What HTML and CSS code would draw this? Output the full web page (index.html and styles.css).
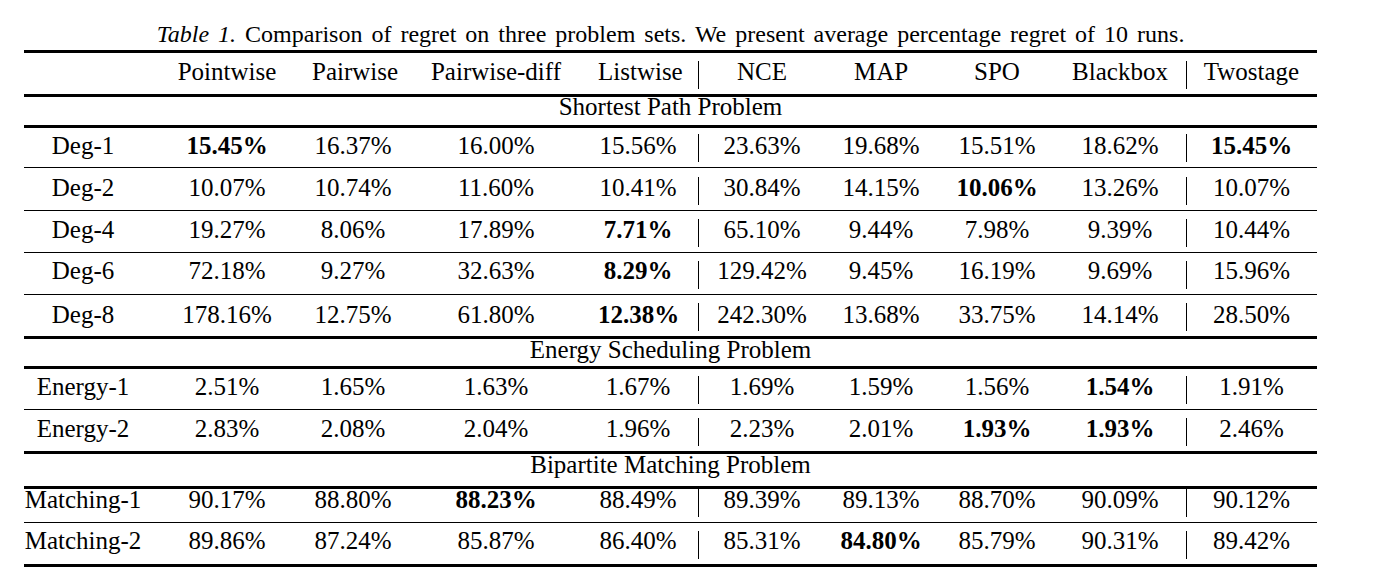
FILE: index.html
```html
<!DOCTYPE html>
<html>
<head>
<meta charset="utf-8">
<link rel="stylesheet" href="styles.css">
</head>
<body>
<table class="results">
  <caption><em>Table 1.</em> Comparison of regret on three problem sets. We present average percentage regret of 10 runs.</caption>
  <colgroup>
    <col class="c-label"><col class="c-point"><col class="c-pair"><col class="c-pdiff"><col class="c-list"><col class="c-nce"><col class="c-map"><col class="c-spo"><col class="c-bb"><col class="c-two">
  </colgroup>
  <thead>
    <tr class="head">
      <th></th><th>Pointwise</th><th>Pairwise</th><th>Pairwise-diff</th><th>Listwise</th><th>NCE</th><th>MAP</th><th>SPO</th><th>Blackbox</th><th>Twostage</th>
    </tr>
  </thead>
  <tbody>
    <tr class="section s1"><td colspan="10">Shortest Path Problem</td></tr>
    <tr class="row r-deg1"><td>Deg-1</td><td><b>15.45%</b></td><td>16.37%</td><td>16.00%</td><td>15.56%</td><td>23.63%</td><td>19.68%</td><td>15.51%</td><td>18.62%</td><td><b>15.45%</b></td></tr>
    <tr class="row r-deg2"><td>Deg-2</td><td>10.07%</td><td>10.74%</td><td>11.60%</td><td>10.41%</td><td>30.84%</td><td>14.15%</td><td><b>10.06%</b></td><td>13.26%</td><td>10.07%</td></tr>
    <tr class="row r-deg4"><td>Deg-4</td><td>19.27%</td><td>8.06%</td><td>17.89%</td><td><b>7.71%</b></td><td>65.10%</td><td>9.44%</td><td>7.98%</td><td>9.39%</td><td>10.44%</td></tr>
    <tr class="row r-deg6"><td>Deg-6</td><td>72.18%</td><td>9.27%</td><td>32.63%</td><td><b>8.29%</b></td><td>129.42%</td><td>9.45%</td><td>16.19%</td><td>9.69%</td><td>15.96%</td></tr>
    <tr class="row r-deg8 end"><td>Deg-8</td><td>178.16%</td><td>12.75%</td><td>61.80%</td><td><b>12.38%</b></td><td>242.30%</td><td>13.68%</td><td>33.75%</td><td>14.14%</td><td>28.50%</td></tr>
    <tr class="section s2"><td colspan="10">Energy Scheduling Problem</td></tr>
    <tr class="row r-en1"><td>Energy-1</td><td>2.51%</td><td>1.65%</td><td>1.63%</td><td>1.67%</td><td>1.69%</td><td>1.59%</td><td>1.56%</td><td><b>1.54%</b></td><td>1.91%</td></tr>
    <tr class="row r-en2 end"><td>Energy-2</td><td>2.83%</td><td>2.08%</td><td>2.04%</td><td>1.96%</td><td>2.23%</td><td>2.01%</td><td><b>1.93%</b></td><td><b>1.93%</b></td><td>2.46%</td></tr>
    <tr class="section s3"><td colspan="10">Bipartite Matching Problem</td></tr>
    <tr class="row r-m1"><td>Matching-1</td><td>90.17%</td><td>88.80%</td><td><b>88.23%</b></td><td>88.49%</td><td>89.39%</td><td>89.13%</td><td>88.70%</td><td>90.09%</td><td>90.12%</td></tr>
    <tr class="row r-m2 end"><td>Matching-2</td><td>89.86%</td><td>87.24%</td><td>85.87%</td><td>86.40%</td><td>85.31%</td><td><b>84.80%</b></td><td>85.79%</td><td>90.31%</td><td>89.42%</td></tr>
  </tbody>
</table>
</body>
</html>
```

FILE: styles.css
```css
html, body {
  margin: 0;
  padding: 0;
  background: #fff;
}

body {
  font-family: "Liberation Serif", "Times New Roman", serif;
  color: #000;
}

.results {
  margin-left: 24px;
  width: 1293px;
  table-layout: fixed;
  border-collapse: separate;
  border-spacing: 0;
  font-size: 25px;
  line-height: 18px;
}

.results caption {
  font-size: 24px;
  line-height: 18px;
  word-spacing: 3px;
  padding: 25px 0 7px;
  text-align: center;
  white-space: nowrap;
}

.results caption em {
  font-style: italic;
}

.c-label { width: 118px; }
.c-point { width: 170px; }
.c-pair  { width: 82px; }
.c-pdiff { width: 204px; }
.c-list  { width: 100px; }
.c-nce   { width: 128px; }
.c-map   { width: 110px; }
.c-spo   { width: 122px; }
.c-bb    { width: 128px; }
.c-two   { width: 131px; }

.results th,
.results td {
  box-sizing: border-box;
  padding: 10px 0 0;
  text-align: center;
  vertical-align: top;
  font-weight: normal;
  white-space: nowrap;
}

.results b {
  font-weight: bold;
}

/* Listwise and Blackbox columns sit slightly left of their cell centre */
.results tr > :nth-child(5) { padding-right: 20px; }
.results tr > :nth-child(9) { padding-right: 4px; }

/* short vertical separators before NCE and Twostage */
.head > :nth-child(6),
.head > :nth-child(10),
.row > :nth-child(6),
.row > :nth-child(10) {
  background-image: linear-gradient(#000, #000);
  background-repeat: no-repeat;
  background-size: 1px 28px;
  background-position: left bottom 5px;
}

/* header */
.head th {
  height: 47px;
  padding-top: 10px;
  border-top: 3px solid #000;
  border-bottom: 3px solid #000;
}

/* section titles */
.section td {
  border-bottom: 3px solid #000;
  padding-top: 1px;
}
.s1 td { height: 31px; }
.s2 td { height: 30px; padding-top: 2px; }
.s3 td { height: 35px; padding-top: 2px; }

/* data rows */
.row td {
  border-bottom: 1px solid #000;
}
.row.end td {
  border-bottom: 3px solid #000;
}

.r-deg1 td { height: 40px; padding-top: 9px; }
.r-deg2 td { height: 43px; padding-top: 11px; }
.r-deg4 td { height: 42px; padding-top: 10px; }
.r-deg6 td { height: 42px; padding-top: 9px; }
.r-deg8 td { height: 44px; padding-top: 11px; }
.r-en1 td  { height: 41px; padding-top: 9px; }
.r-en2 td  { height: 44px; padding-top: 10px; }
.r-m1 td   { height: 34px; padding-top: 2px; }
.r-m2 td   { height: 44px; padding-top: 9px; }
```
